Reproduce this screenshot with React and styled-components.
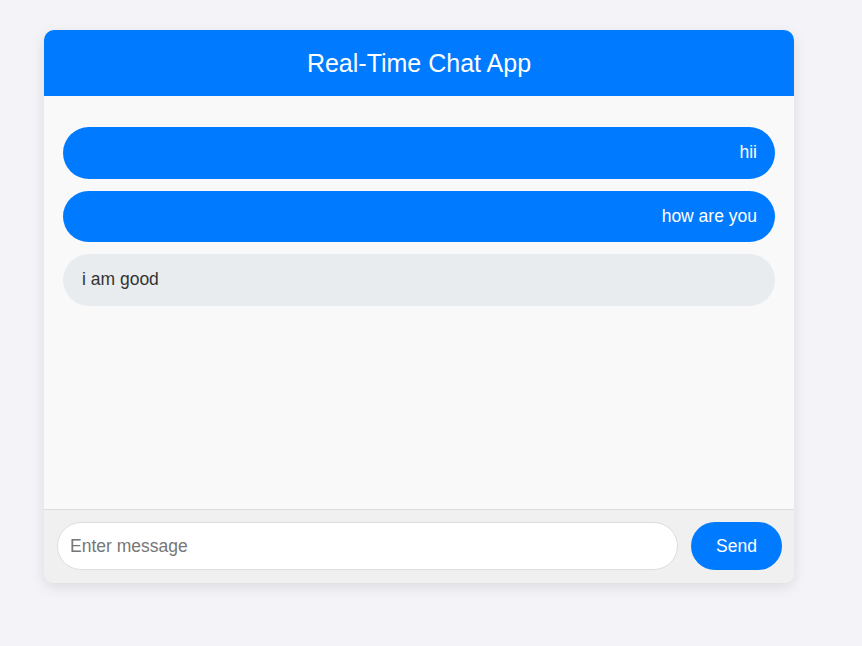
import React, { useState } from 'react';
import styled, { createGlobalStyle } from 'styled-components';

const GlobalStyle = createGlobalStyle`
  body {
    margin: 0;
    background: #f4f4f8;
    font-family: "Liberation Sans", Arial, sans-serif;
  }
`

const Page = styled.div`
  padding: 30px 44px;
`

const Card = styled.div`
  width: 750px;
  background: #f9f9f9;
  border-radius: 10px;
  overflow: hidden;
  box-shadow: 0 4px 14px rgba(0, 0, 0, 0.1);
`

const Header = styled.div`
  height: 66px;
  background: #007bff;
  color: #fff;
  font-size: 25px;
  display: flex;
  align-items: center;
  justify-content: center;
`

const Messages = styled.div`
  height: 413px;
  box-sizing: border-box;
  padding: 31px 19px 19px;
  display: flex;
  flex-direction: column;
  gap: 12px;
`

const Bubble = styled.div`
  height: 51.5px;
  flex-shrink: 0;
  box-sizing: border-box;
  padding: 0 18px 0 19px;
  border-radius: 26px;
  display: flex;
  align-items: center;
  justify-content: ${p => (p.$mine ? 'flex-end' : 'flex-start')};
  background: ${p => (p.$mine ? '#007bff' : '#e9ecef')};
  color: ${p => (p.$mine ? '#fff' : '#333')};
  font-size: 17.5px;
`

const InputBar = styled.div`
  display: flex;
  align-items: center;
  gap: 13px;
  padding: 12px 12px 13px 13px;
  border-top: 1px solid #ddd;
  background: #f0f0f0;
`

const Input = styled.input`
  flex: 1;
  height: 48px;
  box-sizing: border-box;
  padding: 0 12px;
  border: 1px solid #ddd;
  border-radius: 24px;
  background: #fff;
  font-family: inherit;
  font-size: 17.5px;
  color: #333;
  outline: none;
  &::placeholder {
    color: #777;
  }
`

const SendButton = styled.button`
  width: 91px;
  height: 48px;
  border: none;
  border-radius: 24px;
  background: #007bff;
  color: #fff;
  font-family: inherit;
  font-size: 17.5px;
  cursor: pointer;
`

const initial = [
  { text: 'hii', mine: true },
  { text: 'how are you', mine: true },
  { text: 'i am good', mine: false },
]

export default function App() {
  const [messages, setMessages] = useState(initial)
  const [draft, setDraft] = useState('')

  const send = () => {
    if (!draft.trim()) return
    setMessages([...messages, { text: draft, mine: true }])
    setDraft('')
  }

  return (
    <Page>
      <GlobalStyle />
      <Card>
        <Header>Real-Time Chat App</Header>
        <Messages>
          {messages.map((m, i) => (
            <Bubble key={i} $mine={m.mine}>{m.text}</Bubble>
          ))}
        </Messages>
        <InputBar>
          <Input
            placeholder="Enter message"
            value={draft}
            onChange={e => setDraft(e.target.value)}
            onKeyDown={e => e.key === 'Enter' && send()}
          />
          <SendButton onClick={send}>Send</SendButton>
        </InputBar>
      </Card>
    </Page>
  )
}
